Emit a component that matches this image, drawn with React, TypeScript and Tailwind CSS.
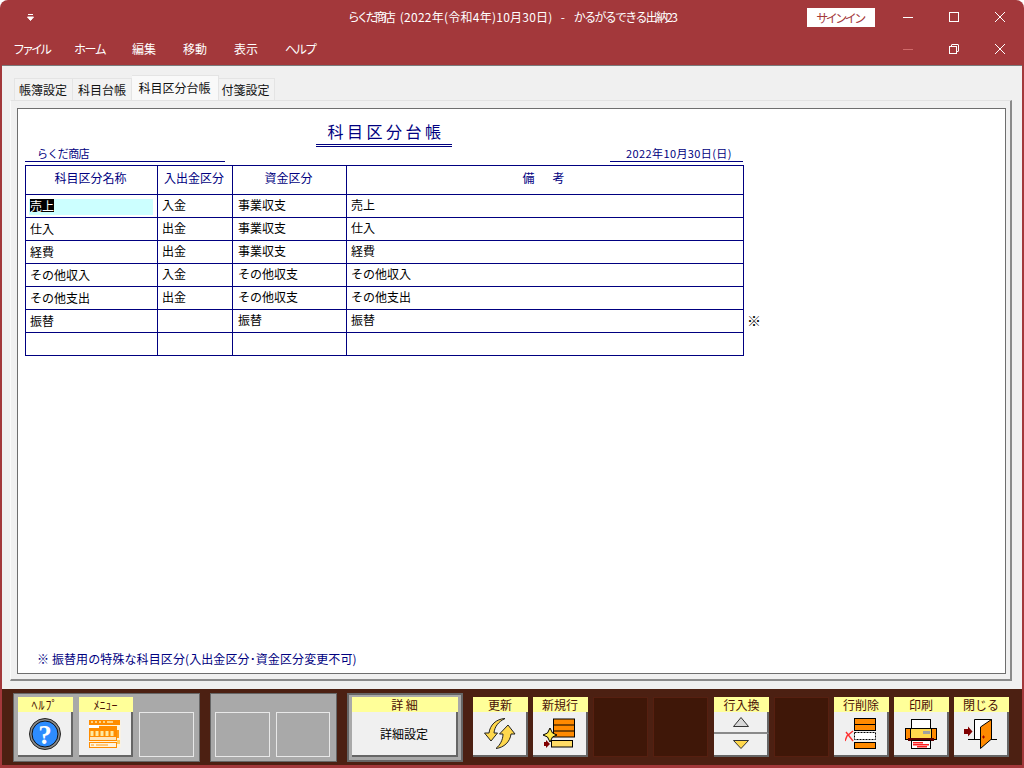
import type {ReactNode} from "react";

const rows = [
    ["売上", "入金", "事業収支", "売上"],
    ["仕入", "出金", "事業収支", "仕入"],
    ["経費", "出金", "事業収支", "経費"],
    ["その他収入", "入金", "その他収支", "その他収入"],
    ["その他支出", "出金", "その他収支", "その他支出"],
    ["振替", "", "振替", "振替"],
    ["", "", "", ""],
];

const Slot = ({label, children, className = "w-[55px]"}: { label: ReactNode; children: ReactNode; className?: string }) => (
    <div className={`flex flex-col shrink-0 ${className}`}>
        <div className="h-[15px] bg-[#ffff99] text-[12px] leading-[15px] text-center text-[#4a1005] pr-[1px]">{label}</div>
        <div className="h-[45px] bg-[#f0f0f0] border-r-2 border-b-2 border-[#666666] flex items-center justify-center">
            {children}
        </div>
    </div>
);

const EmptyKey = ({className = "w-[55px]"}: { className?: string }) => (
    <div className={`h-[45px] mt-[15px] border border-[#e8e8e8] shrink-0 ${className}`}/>
);

const DarkSlot = () => (
    <div className="w-[55px] h-[60px] shrink-0 bg-[#3f1708] border border-[#561f10]"/>
);

const HelpIcon = () => (
    <svg width="32" height="32" viewBox="0 0 32 32">
        <circle cx="16" cy="16" r="15.5" fill="#8a8a8a" stroke="#222222" strokeWidth="1"/>
        <circle cx="16" cy="16" r="13" fill="#2d8cff" stroke="#111111" strokeWidth="1"/>
        <text x="16" y="25.5" textAnchor="middle" fontSize="27" fontWeight="700" fill="#ffffff"
              fontFamily="'Liberation Serif', serif">?
        </text>
    </svg>
);

const MenuIcon = () => (
    <svg width="32" height="28" viewBox="0 0 32 28">
        <rect x="0.5" y="0.5" width="31" height="27" fill="#fff3dc"/>
        <rect x="0" y="0" width="31" height="5" fill="#ff8c00"/>
        <path d="M2 2h2M6 2h2M10 2h2M14 2h2M18 2h6" stroke="#ffe9b0" strokeWidth="1.5"/>
        <rect x="0" y="6" width="28" height="15" fill="#ff8c00"/>
        <rect x="0" y="5" width="10" height="3" fill="#ffffff"/>
        <path d="M3 11v5M8 11v5M13 11v5M18 11v5M23 11v5" stroke="#ffe9a0" strokeWidth="3"/>
        <rect x="1" y="17" width="26" height="3" fill="#ffe5bb"/>
        <rect x="0" y="22" width="28" height="6" fill="#ff8c00"/>
        <rect x="1" y="23" width="26" height="4" fill="#fff3dc"/>
        <path d="M2 25h3M7 25h12" stroke="#ff9d1a" strokeWidth="1"/>
        <rect x="28" y="10" width="2" height="8" fill="#ff9d1a"/>
        <rect x="28" y="20" width="3" height="4" fill="#ffcc66"/>
    </svg>
);

const RefreshIcon = () => (
    <svg width="32" height="31" viewBox="0 0 32 31">
        <path d="M21 0.5C12 1 6 7 5 15H0.5L7 23L13.5 15H10C10.5 9 14 4 21 0.5Z" fill="#ffd84d" stroke="#222222"/>
        <path d="M24 7L15.5 16H19C19 22 16 27 12 30.5C20 29.5 26 24 27 16H31Z" fill="#ffd84d" stroke="#222222"/>
    </svg>
);

const NewRowIcon = () => (
    <svg width="34" height="32" viewBox="0 0 34 32">
        <rect x="10.5" y="1" width="21" height="18" fill="#ff8a00" stroke="#000000"/>
        <path d="M10.5 7H31.5M10.5 13H31.5" stroke="#000000"/>
        <rect x="8.5" y="22.5" width="21" height="6.5" fill="#ffdc66" stroke="#000000"/>
        <path d="M7 10L9.5 15L14 17L9.5 19L7 24L4.500 19L0 17L4.500 15Z" fill="#ffe94d" stroke="#000000"/>
        <path d="M1 24H3V22L7 26L3 30V28H1Z" fill="#800000"/>
    </svg>
);

const DeleteRowIcon = () => (
    <svg width="32" height="32" viewBox="0 0 32 32">
        <rect x="9.5" y="0.5" width="21" height="12" fill="#ff8a00" stroke="#000000"/>
        <path d="M9.500 6.500H30.500" stroke="#000000"/>
        <rect x="9.5" y="14.500" width="21" height="7" fill="#ffffff" stroke="#000000" strokeDasharray="2 1"/>
        <rect x="9.5" y="24.500" width="21" height="6" fill="#ff8a00" stroke="#000000"/>
        <path d="M1 14L8 23M8 13L2 18L0 23" fill="none" stroke="#ff3030" strokeWidth="1.4"/>
    </svg>
);

const PrintIcon = () => (
    <svg width="32" height="30" viewBox="0 0 32 30">
        <rect x="6.5" y="0.5" width="19" height="10" fill="#ffffff" stroke="#000000"/>
        <rect x="0.5" y="9.5" width="31" height="11" fill="#ff8a00" stroke="#000000"/>
        <rect x="5.5" y="9.5" width="21" height="10" fill="#ffd84d" stroke="#000000"/>
        <rect x="18" y="12" width="7" height="3" fill="#a0a0a0"/>
        <rect x="3" y="19" width="26" height="3" fill="#5a0000"/>
        <rect x="6.500" y="21.500" width="19" height="8" fill="#ffffff" stroke="#000000"/>
        <rect x="8" y="23" width="10" height="1.500" fill="#ff2020"/>
        <rect x="8" y="25" width="16" height="1.500" fill="#ff2020"/>
        <rect x="12" y="27" width="10" height="1.500" fill="#ff2020"/>
    </svg>
);

const DoorIcon = () => (
    <svg width="33" height="30" viewBox="0 0 33 30">
        <path d="M0 10H4V7.500L8.500 12.500L4 17.500V15H0Z" fill="#800000"/>
        <path d="M10.500 20.500V0.500H27.500V20.500" fill="#ffffff" stroke="#000000"/>
        <path d="M16.500 29.500V8L27.500 0.500V20Z" fill="#ff8a00" stroke="#000000"/>
        <path d="M4 20.500H16M27 20.500H33" stroke="#000000"/>
        <path d="M18 18H21M19.500 16.500V19.500" stroke="#a00000"/>
    </svg>
);

const WinClose = ({className = ""}: { className?: string }) => (
    <svg width="10" height="10" viewBox="0 0 10 10" className={className}>
        <path d="M0 0L10 10M10 0L0 10" stroke="#ffffff" strokeWidth="1" fill="none"/>
    </svg>
);

const App = () => {
    return (
        <div className="w-[1024px] h-[768px] flex flex-col overflow-hidden rounded-t-[8px] bg-[#a3383b] font-['Noto_Sans_CJK_JP','Liberation_Sans',sans-serif] text-[12px]">
            {/* Title bar */}
            <div className="h-[34px] flex items-center shrink-0 text-white">
                <div className="flex-1 pl-[27px]">
                    <svg width="7" height="7" viewBox="0 0 7 7">
                        <path d="M1 0.5H6M0.5 3H6.5L3.5 6.5Z" stroke="#ffffff" strokeWidth="1" fill="#ffffff"/>
                    </svg>
                </div>
                <div className="flex items-center text-[12px] leading-[18px] whitespace-pre pr-[8px]">
                    <span className="tracking-[-3px]">らくだ商店</span>
                    <span className="ml-[7px] tracking-[0.250px]">(2022年(令和4年)10月30日)</span>
                    <span className="ml-[8px] mr-[9px]">-</span>
                    <span className="tracking-[-1.700px]">かるがるできる出納23</span>
                </div>
                <div className="flex-1 flex justify-end items-center pr-[19px]">
                    <div className="w-[68px] h-[19px] bg-white text-[#a3383b] text-[12px] leading-[19px] tracking-[-2.5px] text-center mr-[28px] pr-[2px]">サインイン</div>
                    <div className="w-[10px] h-[1px] bg-white mr-[36px]"/>
                    <div className="w-[10px] h-[10px] border border-white mr-[36px]"/>
                    <WinClose/>
                </div>
            </div>

            {/* Menu */}
            <div className="h-[31px] flex items-center shrink-0 text-white pb-[1px]">
                <div className="flex-1 flex items-center pl-[13px] text-[12px]">
                    <span className="w-[61px] tracking-[-3px]">ファイル</span>
                    <span className="w-[58px] tracking-[-1.500px]">ホーム</span>
                    <span className="w-[51px]">編集</span>
                    <span className="w-[51px]">移動</span>
                    <span className="w-[51px]">表示</span>
                    <span className="tracking-[-2px]">ヘルプ</span>
                </div>
                <div className="flex items-center pr-[19px]">
                    <div className="w-[10px] h-[1px] bg-[#d06a6a] mr-[36px]"/>
                    <div className="relative w-[10px] h-[10px] mr-[36px]">
                        <div className="absolute left-[2px] top-0 w-[8px] h-[8px] border border-white rounded-[1px]"/>
                        <div className="absolute left-0 top-[2px] w-[8px] h-[8px] border border-white bg-[#a3383b]"/>
                    </div>
                    <WinClose/>
                </div>
            </div>

            {/* Main area */}
            <div className="flex-1 min-h-0 mx-[2px] bg-[#f0f0f0] border-t border-[#7a7a7a] pt-[9px] pb-[8px] flex flex-col">
                <div className="h-[25px] pl-[12px] flex items-end shrink-0 text-[#111111] text-[12px]">
                    <div className="w-[59px] h-[22px] bg-[#f2f2f2] border border-b-0 border-[#e4e4e4] pr-[1px] leading-[21px] text-center">帳簿設定</div>
                    <div className="w-[59px] h-[22px] bg-[#f2f2f2] border border-b-0 border-l-0 border-[#e4e4e4] leading-[21px] text-center">科目台帳</div>
                    <div className="w-[87px] h-[25px] bg-[#f9f9f9] border border-b-0 border-l-0 border-[#e4e4e4] pr-[1px] leading-[23px] text-center">科目区分台帳</div>
                    <div className="w-[56px] h-[22px] bg-[#f2f2f2] border border-b-0 border-l-0 border-[#e4e4e4] pr-[2px] leading-[21px] text-center">付箋設定</div>
                </div>
                <div className="flex-1 min-h-0 ml-[8px] mr-[10px] border-t border-l border-t-[#e2e2e2] border-l-[#fafafa] border-r-2 border-b-2 border-r-[#8a8a8a] border-b-[#8a8a8a] pl-[6px] pr-[4px] pt-[7px] pb-[5px] flex">
                    {/* Ledger page */}
                    <div className="flex-1 bg-white border border-[#6e6e6e] pl-[7px] flex flex-col text-[#000080]">
                        <div className="ml-[291px] mt-[13px] w-[136px] h-[25px] border-b-[3px] border-double border-[#000080] pl-[4px] text-[16px] leading-[19px] tracking-[3.500px] text-center shrink-0">科目区分台帳</div>
                        <div className="w-[718px] h-[15px] flex justify-between items-end shrink-0">
                            <div className="w-[200px] h-[15px] border-b border-[#000080] pl-[12px] text-[11px] leading-[12px] tracking-[-0.600px]">らくだ商店</div>
                            <div className="w-[133px] h-[15px] border-b border-[#000080] pl-[16px] text-[11px] leading-[12px] tracking-[0.400px]">2022年10月30日(日)</div>
                        </div>

                        <div className="mt-[3px] flex flex-col shrink-0">
                            <div className="w-[719px] h-[30px] flex border-t border-[#000080] text-center">
                                <div className="w-[133px] border-x border-b border-[#000080] pr-[2px] pt-[3px] leading-[18px]">科目区分名称</div>
                                <div className="w-[75px] border-r border-b border-[#000080] pt-[3px] pr-[2px] leading-[18px]">入出金区分</div>
                                <div className="w-[114px] border-r border-b border-[#000080] pt-[3px] pr-[2px] leading-[18px]">資金区分</div>
                                <div className="w-[397px] border-r border-b border-[#000080] pt-[3px] leading-[18px] tracking-[3px] whitespace-pre">備　考</div>
                            </div>
                            {rows.map((row, i) => (
                                <div key={i} className="flex h-[23px]">
                                    <div className="w-[719px] flex text-black leading-[20px]">
                                        <div className="w-[133px] border-x border-b border-[#000080] pl-[3px] pt-[1px]">
                                            {i === 0 ? (
                                                <div className="w-[124px] h-[16px] mt-[3px] bg-[#ccffff] leading-[14px]">
                                                    <span className="bg-black text-white inline-block ml-[1px] h-[13px] leading-[13px]">{row[0]}</span>
                                                </div>
                                            ) : (
                                                <span className="pl-[1px]">{row[0]}</span>
                                            )}
                                        </div>
                                        <div className="w-[75px] border-r border-b border-[#000080] pl-[4px]">{row[1]}</div>
                                        <div className="w-[114px] border-r border-b border-[#000080] pl-[5px]">{row[2]}</div>
                                        <div className="w-[397px] border-r border-b border-[#000080] pl-[4px]">{row[3]}</div>
                                    </div>
                                    {i === 5 && <span className="ml-[3px] text-[14px] leading-[21px] text-black">※</span>}
                                </div>
                            ))}
                        </div>

                        <div className="mt-auto pl-[12px] pb-[5px] leading-[18px] text-[12px] tracking-[0.100px] whitespace-pre">※ 振替用の特殊な科目区分(入出金区分･資金区分変更不可)</div>
                    </div>
                </div>
            </div>

            {/* Function keys */}
            <div className="h-[76px] shrink-0 mx-[2px] bg-[#4c2012] pl-[11px] pt-[4px] flex items-start">
                <div className="w-[187px] h-[69px] bg-[#a9a9a9] border border-[#666666] pl-[4px] pt-[3px] flex gap-[6px] shrink-0">
                    <Slot label={<span className="tracking-[1px]">ﾍﾙﾌﾟ</span>}><HelpIcon/></Slot>
                    <Slot label="ﾒﾆｭｰ" className="w-[54px]"><MenuIcon/></Slot>
                    <EmptyKey/>
                </div>
                <div className="w-[127px] h-[69px] ml-[10px] bg-[#a9a9a9] border border-[#666666] pl-[4px] pt-[3px] flex gap-[6px] shrink-0">
                    <EmptyKey/>
                    <EmptyKey className="w-[54px]"/>
                </div>
                <div className="w-[116px] h-[69px] ml-[10px] bg-[#a9a9a9] border-2 border-[#666666] pl-[3px] pt-[2px] flex shrink-0">
                    <Slot label="詳 細" className="w-[106px]"><span className="text-black">詳細設定</span></Slot>
                </div>
                <div className="ml-[10px] pt-[4px] flex gap-[5px]">
                    <Slot label="更新"><RefreshIcon/></Slot>
                    <Slot label="新規行"><NewRowIcon/></Slot>
                    <DarkSlot/>
                    <DarkSlot/>
                    <div className="w-[55px] ml-[1px] flex flex-col shrink-0">
                        <div className="h-[15px] bg-[#ffff99] text-center leading-[15px] text-[#4a1005]">行入換</div>
                        <div className="h-[22px] bg-[#f0f0f0] border-r-2 border-b-2 border-r-[#666666] border-b-[#8a8a8a] flex items-center justify-center">
                            <svg width="16" height="10" viewBox="0 0 16 10">
                                <path d="M8 0.5L15.5 9.5H0.5Z" fill="#d8d8d8" stroke="#333333"/>
                            </svg>
                        </div>
                        <div className="h-[23px] bg-[#f0f0f0] border-r-2 border-b-2 border-[#666666] flex items-center justify-center">
                            <svg width="16" height="9" viewBox="0 0 16 9">
                                <path d="M0.5 0.5H15.5L8 8.5Z" fill="#ffd84d" stroke="#333333"/>
                            </svg>
                        </div>
                    </div>
                    <DarkSlot/>
                    <Slot label="行削除"><DeleteRowIcon/></Slot>
                    <Slot label="印刷"><PrintIcon/></Slot>
                    <Slot label="閉じる"><DoorIcon/></Slot>
                </div>
            </div>
            <div className="h-[3px] shrink-0"/>
        </div>
    );
};

export default App;
